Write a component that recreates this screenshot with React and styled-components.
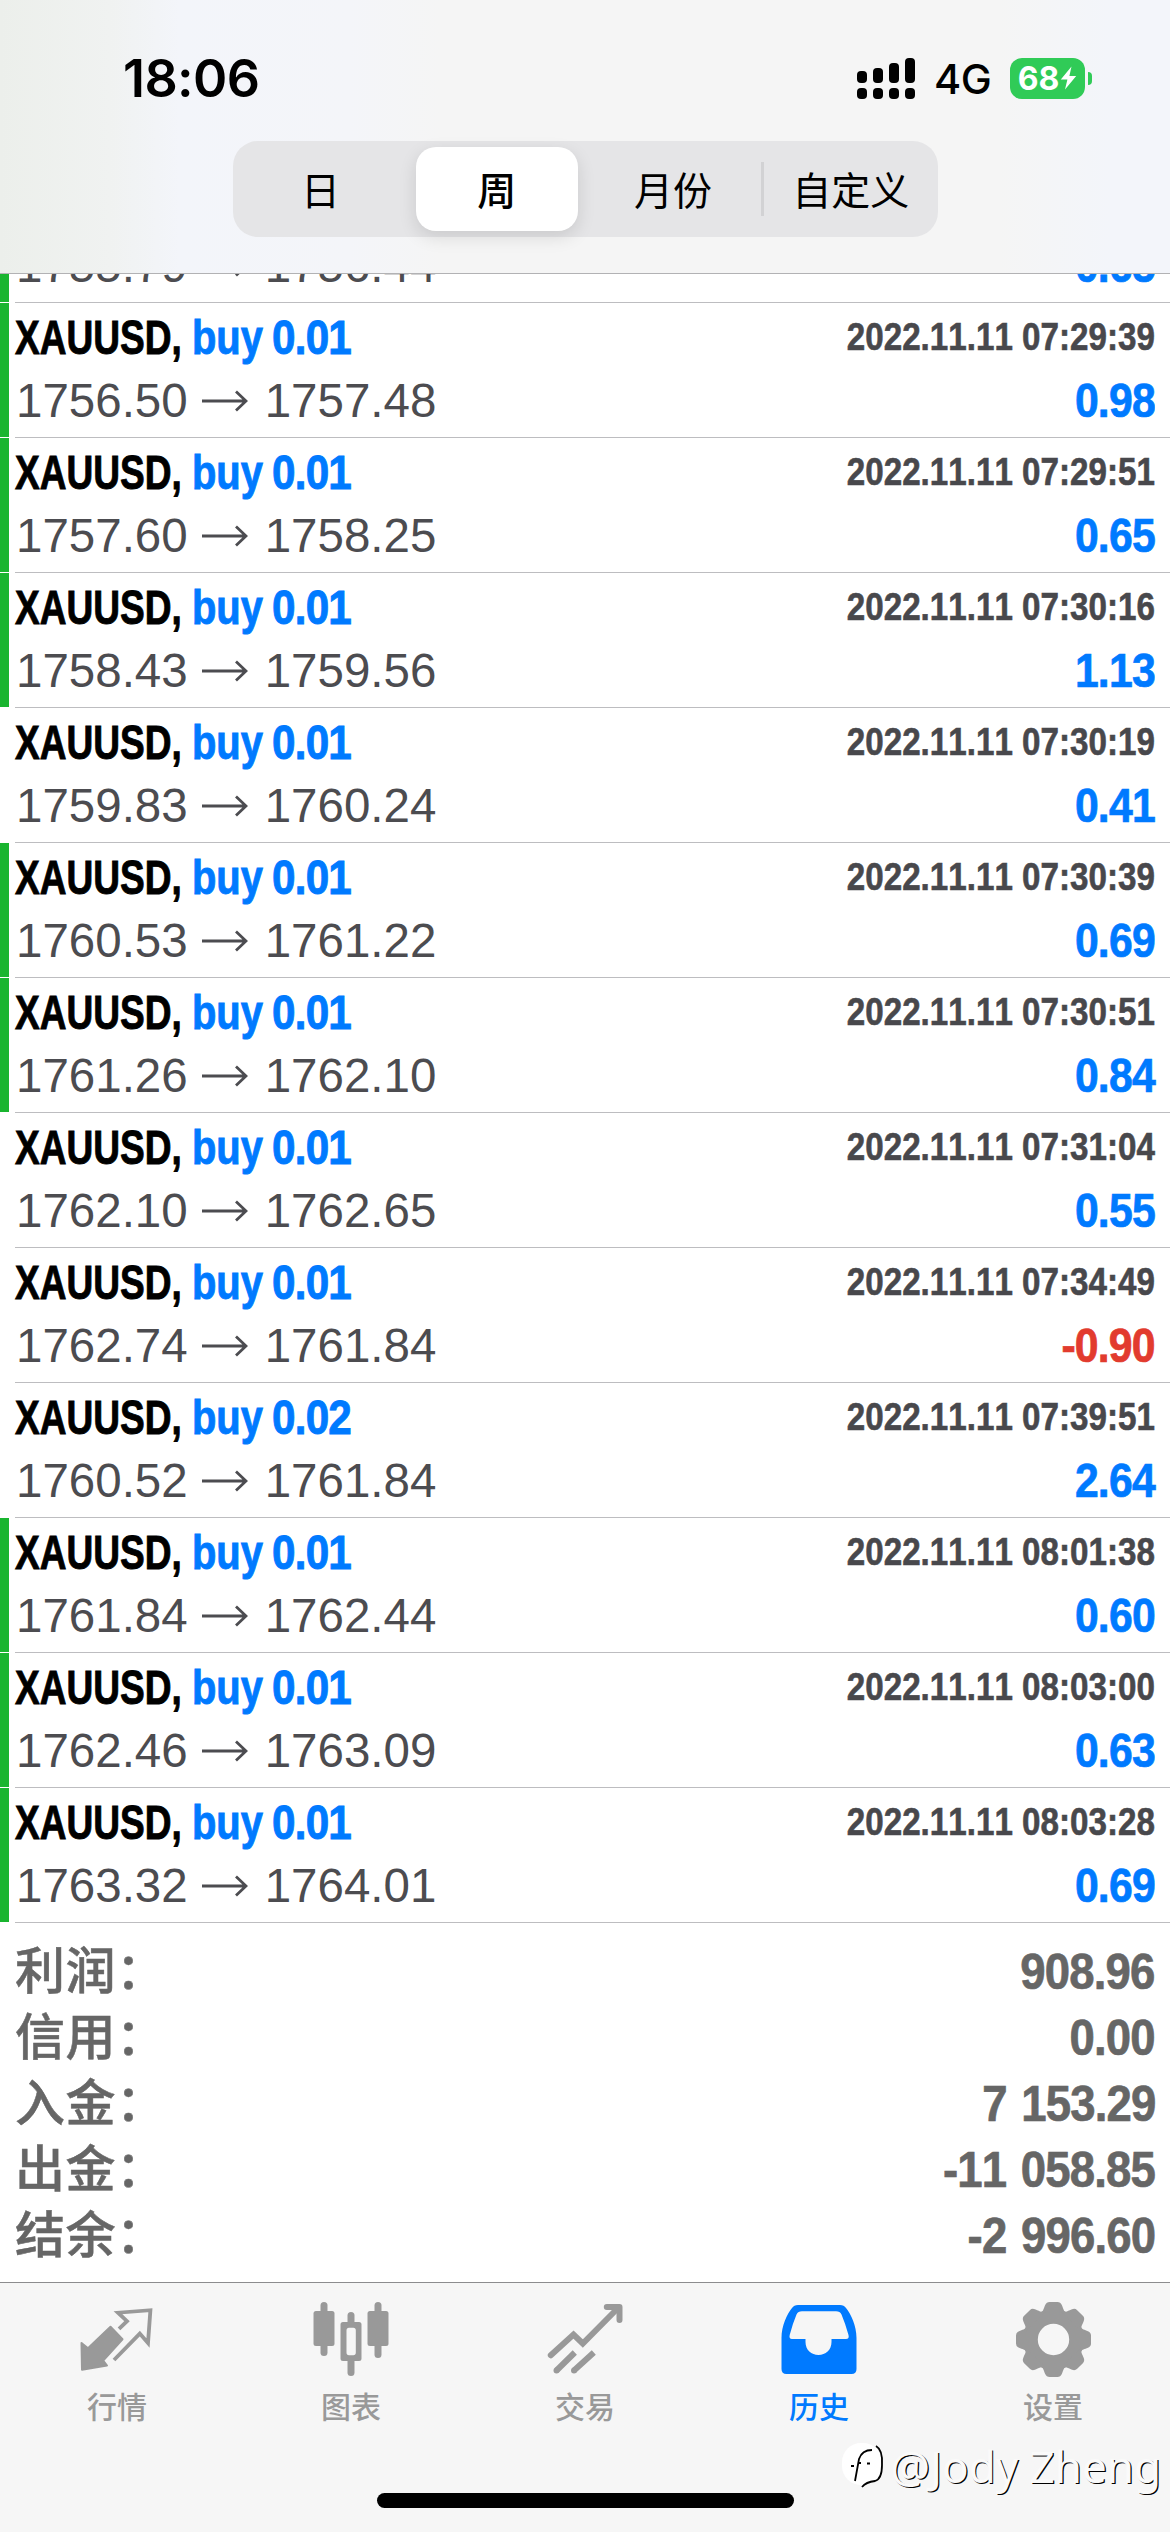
import React from "react";
import styled, { createGlobalStyle } from "styled-components";

const deals = [
  { open: "1755.79", close: "1756.44", time: "2022.11.11 07:29:23", profit: "0.65", lot: "0.01", tp: true },
  { open: "1756.50", close: "1757.48", time: "2022.11.11 07:29:39", profit: "0.98", lot: "0.01", tp: true },
  { open: "1757.60", close: "1758.25", time: "2022.11.11 07:29:51", profit: "0.65", lot: "0.01", tp: true },
  { open: "1758.43", close: "1759.56", time: "2022.11.11 07:30:16", profit: "1.13", lot: "0.01", tp: true },
  { open: "1759.83", close: "1760.24", time: "2022.11.11 07:30:19", profit: "0.41", lot: "0.01", tp: false },
  { open: "1760.53", close: "1761.22", time: "2022.11.11 07:30:39", profit: "0.69", lot: "0.01", tp: true },
  { open: "1761.26", close: "1762.10", time: "2022.11.11 07:30:51", profit: "0.84", lot: "0.01", tp: true },
  { open: "1762.10", close: "1762.65", time: "2022.11.11 07:31:04", profit: "0.55", lot: "0.01", tp: false },
  { open: "1762.74", close: "1761.84", time: "2022.11.11 07:34:49", profit: "-0.90", lot: "0.01", tp: false },
  { open: "1760.52", close: "1761.84", time: "2022.11.11 07:39:51", profit: "2.64", lot: "0.02", tp: false },
  { open: "1761.84", close: "1762.44", time: "2022.11.11 08:01:38", profit: "0.60", lot: "0.01", tp: true },
  { open: "1762.46", close: "1763.09", time: "2022.11.11 08:03:00", profit: "0.63", lot: "0.01", tp: true },
  { open: "1763.32", close: "1764.01", time: "2022.11.11 08:03:28", profit: "0.69", lot: "0.01", tp: true },
];

const totals = [
  { label: "利润：", value: "908.96" },
  { label: "信用：", value: "0.00" },
  { label: "入金：", value: "7 153.29" },
  { label: "出金：", value: "-11 058.85" },
  { label: "结余：", value: "-2 996.60" },
];

const SignalIcon = () => (
  <svg width="58" height="41" viewBox="0 0 58 41">
    <rect x="0" y="13" width="10" height="12" rx="4" />
    <rect x="16" y="10" width="10" height="15" rx="4" />
    <rect x="32" y="5" width="10" height="20" rx="4" />
    <rect x="48" y="0" width="10" height="25" rx="4" />
    {[0, 16, 32, 48].map((x) => (
      <rect key={x} x={x} y="30" width="10" height="11" rx="4" />
    ))}
  </svg>
);

const BoltIcon = () => (
  <svg width="17" height="24" viewBox="0 0 17 24">
    <path d="M11.5 0.5L0.8 13.4h6.6L5 23.5 16.2 10H9.4z" fill="#fff" />
  </svg>
);

const ArrowIcon = () => (
  <svg width="46" height="22" viewBox="0 0 46 22">
    <path d="M0 11H44M34 1.5L44 11L34 20.5" fill="none" stroke="#4c4c50" strokeWidth="2.8" />
  </svg>
);

const QuotesIcon = () => (
  <TabSvg viewBox="0 0 75 75">
    <path
      d="M1.5 41L8 46.3L30.5 24.7L42.5 37.3L23.2 58.5L27 63.5L2 67.7Z"
      fill="currentColor"
      stroke="currentColor"
      strokeWidth="2"
      strokeLinejoin="round"
    />
    <path
      d="M39 26.8L47 19.2L38 10.7L70.4 8.2L68 41L59.8 31.6L34 58"
      fill="none"
      stroke="currentColor"
      strokeWidth="3.8"
    />
  </TabSvg>
);

const ChartIcon = () => (
  <TabSvg viewBox="0 0 75 75">
    <g fill="currentColor">
      <rect x="6.5" y="0" width="7" height="54" rx="3.5" />
      <rect x="-0.5" y="9" width="21" height="35" rx="2.5" />
      <rect x="60.5" y="0" width="7" height="56" rx="3.5" />
      <rect x="53.5" y="9" width="21" height="35" rx="2.5" />
      <rect x="33.5" y="10" width="7" height="14" rx="3.5" />
      <rect x="33.5" y="55" width="7" height="19" rx="3.5" />
      <path
        fillRule="evenodd"
        d="M29 20H45Q47.5 20 47.5 22.5V56.5Q47.5 59 45 59H29Q26.5 59 26.5 56.5V22.5Q26.5 20 29 20ZM35 25.7Q32.5 25.7 32.5 28.5V50.5Q32.5 53.3 35 53.3H39.3Q41.8 53.3 41.8 50.5V28.5Q41.8 25.7 39.3 25.7Z"
      />
    </g>
  </TabSvg>
);

const TradeIcon = () => (
  <TabSvg viewBox="0 0 75 75">
    <g fill="none" stroke="currentColor" strokeWidth="6">
      <path d="M2.8 53.3L25.5 32.5L34.8 41.5L70 6" strokeLinecap="round" />
      <path d="M58.8 5H71.5V18" strokeLinecap="round" strokeLinejoin="round" />
      <path d="M26.8 50.5L8.5 68.5M45.8 50.5L26 68.5" />
    </g>
    <circle cx="8.5" cy="68.5" r="3" fill="currentColor" />
    <circle cx="26" cy="68.5" r="3" fill="currentColor" />
  </TabSvg>
);

const HistoryIcon = () => (
  <TabSvg viewBox="0 0 75 75">
    <path
      fill="currentColor"
      fillRule="evenodd"
      d="M-0.5 36C-0.5 24 5 12 10 6Q12 3 16 3H58Q62 3 64 6C69 12 74.5 24 74.5 36V67Q74.5 72 69.5 72H4.5Q-0.5 72 -0.5 67ZM20 9.3Q16 9.3 14.5 12.5Q10.5 22 7.7 33Q6.8 37 10 37H23.5V40C23.5 48 29.5 53 36.5 53C43.5 53 49.5 48 49.5 40V37H64Q67.5 37 66.5 33Q63.5 22 59.5 12.5Q58 9.3 54 9.3Z"
    />
  </TabSvg>
);

const SettingsIcon = () => (
  <TabSvg viewBox="-37.5 -37.5 75 75">
    <circle r="23" fill="none" stroke="currentColor" strokeWidth="14.6" />
    {[0, 45, 90, 135, 180, 225, 270, 315].map((angle) => (
      <path
        key={angle}
        transform={`rotate(${angle})`}
        fill="currentColor"
        d="M-14 -25C-9.5 -29 -10 -31 -8.3 -34.5Q-7 -37.5 -4 -37.5H4Q7 -37.5 8.3 -34.5C10 -31 9.5 -29 14 -25Z"
      />
    ))}
  </TabSvg>
);

const tabs = [
  { label: "行情", Icon: QuotesIcon },
  { label: "图表", Icon: ChartIcon },
  { label: "交易", Icon: TradeIcon },
  { label: "历史", Icon: HistoryIcon, active: true },
  { label: "设置", Icon: SettingsIcon },
];

const DealRow = ({ deal }) => {
  return (
    <StyledDealRow>
      <Marker $on={deal.tp} />
      <DealBody>
        <DealLine $height={60}>
          <DealTitle>
            <Symbol>XAUUSD,</Symbol>
            <Side>buy</Side>
            <Volume>{deal.lot}</Volume>
          </DealTitle>
          <Time>{deal.time}</Time>
        </DealLine>
        <DealLine $height={65}>
          <Prices>
            <span>{deal.open}</span>
            <ArrowIcon />
            <span>{deal.close}</span>
          </Prices>
          <Profit $loss={deal.profit.startsWith("-")}>{deal.profit}</Profit>
        </DealLine>
      </DealBody>
    </StyledDealRow>
  );
};

const App = () => {
  return (
    <Screen>
      <GlobalStyle />
      <Header>
        <StatusBar>
          <Clock>18:06</Clock>
          <StatusRight>
            <SignalIcon />
            <Network>4G</Network>
            <Battery>
              <BatteryBody>
                68
                <BoltIcon />
              </BatteryBody>
              <BatteryCap />
            </Battery>
          </StatusRight>
        </StatusBar>
        <Segments>
          <Segment>日</Segment>
          <Segment $selected>周</Segment>
          <Segment>月份</Segment>
          <Segment $divided>自定义</Segment>
        </Segments>
      </Header>
      <DealList>
        {deals.map((deal) => (
          <DealRow key={deal.time} deal={deal} />
        ))}
      </DealList>
      <Summary>
        {totals.map(({ label, value }) => (
          <SummaryRow key={label}>
            <SummaryLabel>{label}</SummaryLabel>
            <SummaryValue>{value}</SummaryValue>
          </SummaryRow>
        ))}
      </Summary>
      <TabBar>
        <Tabs>
          {tabs.map(({ label, Icon, active }) => (
            <Tab key={label} $active={active}>
              <Icon />
              <span>{label}</span>
            </Tab>
          ))}
        </Tabs>
        <HomeIndicator />
      </TabBar>
      <Watermark>
        <svg width="44" height="50" viewBox="0 0 44 50">
          <rect x="0" y="2" width="40" height="42" rx="19" fill="#fff" />
          <g fill="none" stroke="#000" strokeWidth="1.8">
            <path d="M13 40L17 18Q20 9 30 9M9 25H12M16 22H19M25 22.5H28" />
            <path d="M34 5Q41 9 40 24Q40 38 33 40Q24 41 20 46" />
          </g>
        </svg>
        <span>@Jody Zheng</span>
      </Watermark>
    </Screen>
  );
};

const GlobalStyle = createGlobalStyle`
  body {
    margin: 0;
    background: #fff;
  }
  svg {
    display: block;
    flex-shrink: 0;
  }
`;

const Screen = styled.div`
  position: relative;
  display: flex;
  flex-direction: column;
  width: 1170px;
  height: 2532px;
  overflow: hidden;
  background: #fff;
  font-family: "Liberation Sans", "Noto Sans CJK SC", sans-serif;
  font-kerning: none;
`;

const Header = styled.header`
  box-sizing: border-box;
  flex-shrink: 0;
  height: 274px;
  border-bottom: 1px solid #b2b2b4;
  background: linear-gradient(
    90deg,
    #ecefeb 0,
    #f0f2f1 110px,
    #f3f5fa 180px,
    #f4f5f9 350px,
    #f5f5f5 440px,
    #f5f5f5 1000px,
    #f3f5fa 1110px,
    #f3f5fa 1170px
  );
`;

const StatusBar = styled.div`
  display: flex;
  align-items: center;
  justify-content: space-between;
  box-sizing: border-box;
  height: 141px;
  padding: 15px 78px 0 123px;
  font-family: Inter, sans-serif;
`;

const Clock = styled.div`
  font-size: 52px;
  font-weight: 600;
  letter-spacing: -0.6px;
`;

const StatusRight = styled.div`
  display: flex;
  align-items: center;
`;

const Network = styled.div`
  width: 76px;
  padding-left: 19px;
  box-sizing: border-box;
  margin-right: 19px;
  padding-top: 2px;
  font-size: 41.5px;
  font-weight: 500;
  letter-spacing: -0.5px;
`;

const Battery = styled.div`
  display: flex;
  align-items: center;
  gap: 3px;
`;

const BatteryBody = styled.div`
  display: flex;
  align-items: center;
  justify-content: center;
  gap: 1px;
  width: 75px;
  height: 41px;
  border-radius: 12px;
  background: #30cb57;
  color: #fff;
  font-size: 32px;
  font-weight: 700;
`;

const BatteryCap = styled.div`
  width: 4px;
  height: 13px;
  border-radius: 0 6px 6px 0;
  background: #30cb57;
`;

const Segments = styled.div`
  display: grid;
  grid-template-columns: repeat(4, 1fr);
  grid-template-rows: 84px;
  box-sizing: border-box;
  width: 705px;
  height: 96px;
  margin: 0 auto;
  padding: 6px 0;
  border-radius: 25px;
  background: #e5e5e7;
  font-family: "Noto Sans CJK SC", sans-serif;
  font-size: 39px;
  line-height: 42px;
`;

const Segment = styled.div`
  display: flex;
  align-items: center;
  justify-content: center;
  padding-bottom: 3px;
  margin: ${({ $divided }) => ($divided ? "15px 0" : "0 7px")};
  border-left: ${({ $divided }) => ($divided ? "3px solid #d2d2d4" : "none")};
  border-radius: ${({ $divided }) => ($divided ? "0" : "20px")};
  background: ${({ $selected }) => ($selected ? "#fff" : "transparent")};
  box-shadow: ${({ $selected }) => ($selected ? "0 6px 18px rgba(0, 0, 0, 0.12)" : "none")};
  font-weight: ${({ $selected }) => ($selected ? 500 : 400)};
`;

const DealList = styled.main`
  display: flex;
  flex-direction: column;
  justify-content: flex-end;
  flex-shrink: 0;
  height: 1649px;
  overflow: hidden;
`;

const StyledDealRow = styled.div`
  display: flex;
  flex-shrink: 0;
  gap: 6px;
  height: 135px;
`;

const Marker = styled.div`
  width: 9px;
  height: 134px;
  background: ${({ $on }) => ($on ? "#19b52f" : "transparent")};
`;

const DealBody = styled.div`
  flex: 1;
  box-sizing: border-box;
  padding: 5px 15px 4px 0;
  border-bottom: 1px solid #bdbdc0;
`;

const DealLine = styled.div`
  display: flex;
  justify-content: space-between;
  height: ${({ $height }) => $height}px;
  line-height: ${({ $height }) => $height}px;
  font-size: 47.5px;
  white-space: nowrap;
`;

const DealTitle = styled.div`
  display: flex;
  font-weight: 700;
  color: #007aff;
  -webkit-text-stroke: 0.9px currentColor;
`;

/* The bold faces are squeezed horizontally to get a condensed cut. */
const Symbol = styled.div`
  width: 177px;
  color: #000;
  transform: scaleX(0.78);
  transform-origin: left;
`;

const Side = styled.div`
  width: 80px;
  transform: scaleX(0.84);
  transform-origin: left;
`;

const Volume = styled.div`
  letter-spacing: -0.9px;
  transform: scaleX(0.89);
  transform-origin: left;
`;

const Time = styled.div`
  color: #48484c;
  font-size: 38px;
  font-weight: 700;
  line-height: 58px;
  transform: scaleX(0.873);
  transform-origin: right;
  -webkit-text-stroke: 0.6px currentColor;
`;

const Prices = styled.div`
  display: flex;
  align-items: center;
  color: #4c4c50;
  padding-left: 1px;

  svg {
    margin: 0 17px 0 14px;
  }
`;

const Profit = styled.div`
  color: ${({ $loss }) => ($loss ? "#e23b2e" : "#007aff")};
  font-weight: 700;
  letter-spacing: -0.9px;
  transform: scaleX(0.9);
  transform-origin: right;
  -webkit-text-stroke: 0.7px currentColor;
`;

const Summary = styled.section`
  flex: 1;
  padding: 16px 15px 0 15px;
  color: #666;
  font-size: 50px;
  font-weight: 700;
`;

const SummaryRow = styled.div`
  display: flex;
  justify-content: space-between;
  height: 66px;
  line-height: 66px;
`;

const SummaryLabel = styled.div`
  margin-top: -5px;
  font-family: "Noto Sans CJK SC", sans-serif;
  font-weight: 500;
  letter-spacing: 0.5px;
  -webkit-text-stroke: 0.5px currentColor;
`;

const SummaryValue = styled.div`
  letter-spacing: -0.9px;
  word-spacing: 3px;
  transform: scaleX(0.91);
  transform-origin: right;
  -webkit-text-stroke: 0.7px currentColor;
`;

const TabBar = styled.footer`
  display: flex;
  flex-direction: column;
  align-items: center;
  justify-content: space-between;
  flex-shrink: 0;
  box-sizing: border-box;
  height: 250px;
  padding: 19px 0 24px;
  border-top: 1px solid #8c8c8e;
  background: #f6f6f6;
`;

const Tabs = styled.nav`
  display: grid;
  grid-template-columns: repeat(5, 1fr);
  width: 100%;
`;

const Tab = styled.div`
  display: flex;
  flex-direction: column;
  align-items: center;
  gap: 10px;
  color: ${({ $active }) => ($active ? "#007aff" : "#999")};
  font-family: "Noto Sans CJK SC", sans-serif;
  font-size: 30px;
  font-weight: 500;
  line-height: 36px;
`;

const TabSvg = styled.svg`
  width: 75px;
  height: 75px;
  overflow: visible;
`;

const HomeIndicator = styled.div`
  width: 417px;
  height: 15px;
  border-radius: 8px;
  background: #000;
`;

const Watermark = styled.div`
  position: absolute;
  right: 9px;
  bottom: 39px;
  display: flex;
  align-items: center;
  gap: 4px;
  color: #fafafa;
  font-family: "Noto Sans", sans-serif;
  font-size: 44px;
  line-height: 54px;
  text-shadow: 1.2px 1.2px 0.5px #000;
`;

export default App;
